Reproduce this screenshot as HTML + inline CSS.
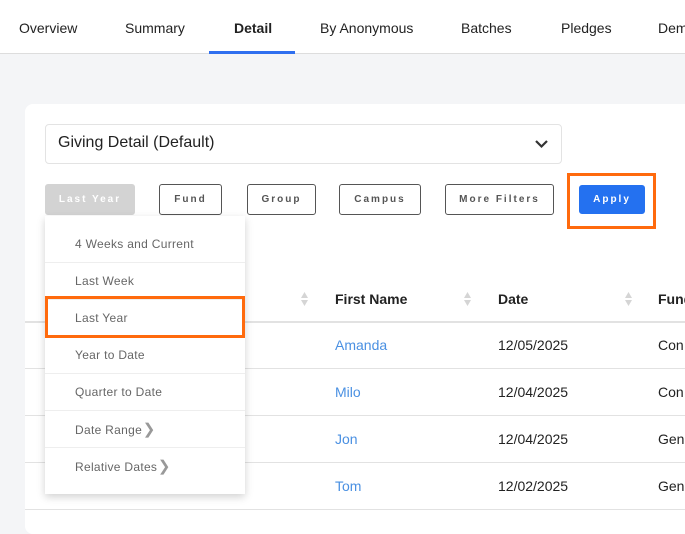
<!DOCTYPE html>
<html><head><style>
*{box-sizing:border-box;margin:0;padding:0}
body{width:685px;height:525px;overflow:hidden;background:#f4f5f7;font-family:"Liberation Sans",sans-serif;position:relative}
.a{position:absolute;white-space:nowrap}
.tab{top:20px;font-size:14px;color:#222}
.btn{position:absolute;top:184px;height:31px;border:1px solid #555;border-radius:3px;background:#fff;font-size:10px;font-weight:bold;letter-spacing:2px;color:#555;display:flex;align-items:center;justify-content:center}
.item{position:absolute;left:0;width:200px;height:37px;border-bottom:1px solid #eee;font-size:12px;color:#666;padding-left:30px;line-height:37px;letter-spacing:.3px}
.line{position:absolute;left:25px;right:0;height:1px;background:#e2e2e2}
.cell{position:absolute;font-size:14px;color:#222}
.lnk{color:#4a90e2}
.sort{position:absolute;width:7px;height:16px}
</style></head><body>
<div class="a" style="left:0;top:0;width:685px;height:54px;background:#fff;border-bottom:1px solid #ddd"></div>
<div class="a tab" style="left:19px">Overview</div>
<div class="a tab" style="left:125px">Summary</div>
<div class="a tab" style="left:234px;font-weight:bold">Detail</div>
<div class="a tab" style="left:320px">By Anonymous</div>
<div class="a tab" style="left:461px">Batches</div>
<div class="a tab" style="left:561px">Pledges</div>
<div class="a tab" style="left:658px">Dem</div>
<div class="a" style="left:209px;top:51px;width:86px;height:3px;background:#2f6fef"></div>

<div class="a" style="left:25px;top:104px;width:700px;height:430px;background:#fff;border-radius:8px"></div>
<div class="a" style="left:45px;top:124px;width:517px;height:40px;border:1px solid #e3e3e3;border-radius:4px;background:#fff"></div>
<div class="a" style="left:58px;top:134px;font-size:16px;color:#222">Giving Detail (Default)</div>
<svg class="a" style="left:534px;top:139px" width="15" height="10"><path d="M2 2l5.5 5.5L13 2" stroke="#333" stroke-width="2.2" fill="none"/></svg>

<div class="btn" style="left:45px;width:90px;background:#d3d3d3;border-color:#d3d3d3;color:#fff">Last Year</div>
<div class="btn" style="left:159px;width:63px">Fund</div>
<div class="btn" style="left:247px;width:69px">Group</div>
<div class="btn" style="left:339px;width:82px">Campus</div>
<div class="btn" style="left:445px;width:109px">More Filters</div>
<div class="btn" style="left:579px;top:185px;height:29px;width:66px;background:#2471f0;border-color:#2471f0;color:#fff">Apply</div>
<div class="a" style="left:567px;top:173px;width:89px;height:56px;border:3px solid #ff6a0d"></div>

<div class="cell" style="left:335px;top:291px;font-weight:bold">First Name</div>
<div class="cell" style="left:498px;top:291px;font-weight:bold">Date</div>
<div class="cell" style="left:658px;top:291px;font-weight:bold">Fund</div>
<svg class="sort" style="left:301px;top:291px" viewBox="0 0 7 16"><path d="M0 7L3.5 1 7 7zM0 9L3.5 15 7 9z" fill="#d5d5d5"/></svg>
<svg class="sort" style="left:464px;top:291px" viewBox="0 0 7 16"><path d="M0 7L3.5 1 7 7zM0 9L3.5 15 7 9z" fill="#d5d5d5"/></svg>
<svg class="sort" style="left:625px;top:291px" viewBox="0 0 7 16"><path d="M0 7L3.5 1 7 7zM0 9L3.5 15 7 9z" fill="#d5d5d5"/></svg>
<div class="line" style="top:321px;height:2px"></div>
<div class="line" style="top:368px"></div>
<div class="line" style="top:415px"></div>
<div class="line" style="top:462px"></div>
<div class="line" style="top:509px"></div>
<div class="cell lnk" style="left:335px;top:337px">Amanda</div><div class="cell" style="left:498px;top:337px">12/05/2025</div><div class="cell" style="left:658px;top:337px">Con</div>
<div class="cell lnk" style="left:335px;top:384px">Milo</div><div class="cell" style="left:498px;top:384px">12/04/2025</div><div class="cell" style="left:658px;top:384px">Con</div>
<div class="cell lnk" style="left:335px;top:431px">Jon</div><div class="cell" style="left:498px;top:431px">12/04/2025</div><div class="cell" style="left:658px;top:431px">Gen</div>
<div class="cell lnk" style="left:335px;top:478px">Tom</div><div class="cell" style="left:498px;top:478px">12/02/2025</div><div class="cell" style="left:658px;top:478px">Gen</div>

<div class="a" style="left:45px;top:216px;width:200px;height:278px;background:#fff;box-shadow:0 3px 8px rgba(0,0,0,.18)">
<div class="item" style="top:10px">4 Weeks and Current</div>
<div class="item" style="top:47px">Last Week</div>
<div class="item" style="top:84px">Last Year</div>
<div class="item" style="top:121px">Year to Date</div>
<div class="item" style="top:158px">Quarter to Date</div>
<div class="item" style="top:195px">Date Range <span style="font-size:15px;color:#999;margin-left:-3px">❯</span></div>
<div class="item" style="top:232px;border:none">Relative Dates <span style="font-size:15px;color:#999;margin-left:-3px">❯</span></div>
</div>
<div class="a" style="left:45px;top:296px;width:200px;height:42px;border:3px solid #ff6a0d"></div>
</body></html>
